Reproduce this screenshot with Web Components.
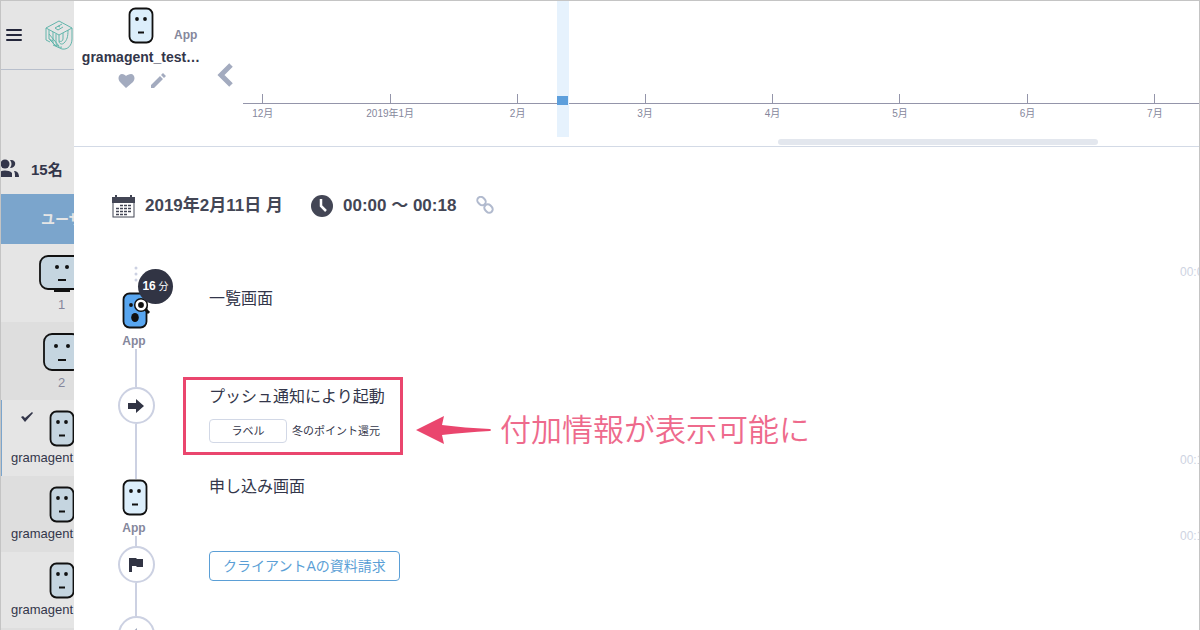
<!DOCTYPE html>
<html lang="ja">
<head>
<meta charset="utf-8">
<title>User timeline</title>
<style>
  * {
    box-sizing: border-box;
  }

  body {
    margin: 0;
    height: 100vh;
    overflow: hidden;
    border: 1px solid #c4c4c4;
    border-bottom: none;
    background-color: #fff;
    color: #33364a;
    font-family: "Liberation Sans", "Noto Sans CJK JP", sans-serif;
    font-size: 14px;
  }
</style>
</head>
<body>

<app-shell>
  <side-bar slot="side">
    <user-row shape="wide" caption="1"></user-row>
    <user-row shape="square" caption="2" alt></user-row>
    <user-row caption="gramagent" selected></user-row>
    <user-row caption="gramagent" alt></user-row>
    <user-row caption="gramagent"></user-row>
    <user-row alt></user-row>
  </side-bar>

  <user-header slot="header" name="gramagent_test…" device="App">
    <month-axis months="12月,2019年1月,2月,3月,4月,5月,6月,7月"></month-axis>
  </user-header>

  <session-title date="2019年2月11日 月" time="00:00 〜 00:18"></session-title>

  <session-event kind="start" device="App" minutes="16" time="00:0">一覧画面</session-event>
  <session-event kind="push">
    <call-out note="付加情報が表示可能に">
      プッシュ通知により起動
      <label-chip slot="detail" text="冬のポイント還元">ラベル</label-chip>
    </call-out>
  </session-event>
  <session-event kind="screen" device="App" time="00:1">申し込み画面</session-event>
  <session-event kind="goal" time="00:1"><goal-button>クライアントAの資料請求</goal-button></session-event>
  <session-event kind="next"></session-event>
</app-shell>

<template id="app-shell-template">
  <style>
    :host {
      display: grid;
      grid-template-columns: 73px minmax(0, 1fr);
      height: 100%;
    }

    aside {
      overflow: hidden;
      background-color: #e5e5e5;
    }

    .panel {
      overflow: hidden;
      background-color: #fff;
    }

    .events {
      padding: 45px 0 0 38px;
    }
  </style>
  <aside><slot name="side"></slot></aside>
  <div class="panel">
    <slot name="header"></slot>
    <main class="events"><slot></slot></main>
  </div>
</template>

<template id="side-bar-template">
  <style>
    :host {
      display: block;
      width: 121px;
    }

    .top {
      display: flex;
      align-items: center;
      gap: 23px;
      box-sizing: border-box;
      height: 69px;
      padding-left: 5px;
      border-bottom: 1px solid #b8bfcc;
    }

    button {
      display: flex;
      padding: 0;
      border: none;
      background: none;
    }

    svg {
      display: block;
    }

    .count {
      display: flex;
      align-items: center;
      gap: 11px;
      height: 52px;
      padding-top: 72px;
      font-size: 15px;
      font-weight: bold;
    }

    .count svg {
      margin-left: -1px;
    }

    .heading {
      height: 50px;
      line-height: 50px;
      padding-left: 40px;
      background-color: #7ba5cc;
      color: #e5e5e5;
      font-size: 14px;
      font-weight: bold;
    }
  </style>
  <div class="top">
    <button aria-label="menu">
      <svg width="16" height="12" stroke="#23263a" stroke-width="2" stroke-linecap="round"><path d="M1 1h14M1 6h14M1 11h14"/></svg>
    </button>
    <svg width="28" height="31" viewBox="0 0 28 31" fill="none" stroke="#62b5ab" stroke-width="1" stroke-linejoin="round">
      <path d="M1 8L14 1L27 8L14 15L1 8V20L5 22"/>
      <path d="M27 8V19C27 25 23 30 17 29L8 25"/>
      <path d="M17 4L10 8L13 10L18 7M13 6L15 7"/>
      <path d="M4 10V19L8 21M8 12V22C8 25 11 26 13 25M11 14V22C11 26 14 28 17 27"/>
      <path d="M14 15V21C14 24 17 25 19 23C22 20 23 17 23 10M18 13V19C18 21 16 22 14 21"/>
      <path d="M4 14L14 26M5 20L12 27"/>
    </svg>
  </div>
  <div class="count">
    <svg width="20" height="18" viewBox="0 0 20 18" fill="#33364a">
      <circle cx="5" cy="5" r="4.500"/>
      <path d="M0 18V13C2 11 9 11 12 14V18Z"/>
      <path d="M10 1C17 0 17 9 10 9C12 6 12 4 10 1ZM14 12C17 12 19 14 19 18H15C15 15 15 14 14 12Z"/>
    </svg>
    <span>15名</span>
  </div>
  <div class="heading">ユーザ</div>
  <slot></slot>
</template>

<template id="user-row-template">
  <style>
    :host {
      display: flex;
      flex-direction: column;
      align-items: center;
      position: relative;
      box-sizing: border-box;
      height: 76px;
      padding-top: 10px;
      --face: #c5d5e0;
    }

    :host([alt]) {
      background-color: #dedede;
    }

    :host([shape]) {
      height: 78px;
      color: #85879c;
    }

    :host([selected]) {
      box-shadow: inset 1px 0 #7ba5cc;
    }

    .caption {
      box-sizing: border-box;
      width: 100%;
      padding-left: 10px;
      font-size: 13px;
      line-height: 22px;
    }

    :host([shape]) .caption {
      padding: 0;
      text-align: center;
    }

    .check {
      position: absolute;
      left: 19px;
      top: 11px;
      display: none;
    }

    :host([selected]) .check {
      display: block;
    }
  </style>
  <svg class="check" width="14" height="12" fill="#33364a"><path d="M1 6L3 5L5 7L12 1L13 2L5 11Z"/></svg>
  <user-face></user-face>
  <span class="caption"></span>
</template>

<template id="user-header-template">
  <style>
    :host {
      display: flex;
      box-sizing: border-box;
      height: 146px;
      border-bottom: 1px solid #d3dae6;
    }

    .profile {
      flex: 0 0 134px;
      display: flex;
      flex-direction: column;
      align-items: center;
      padding-top: 6px;
    }

    .avatar {
      display: grid;
      grid-template-columns: 1fr auto 1fr;
      width: 100%;
    }

    user-face {
      grid-column: 2;
    }

    .device {
      align-self: end;
      padding-left: 20px;
      font-size: 12px;
      font-weight: bold;
      line-height: 18px;
      color: #85879c;
    }

    .name {
      line-height: 26px;
      font-weight: bold;
    }

    .actions {
      display: flex;
      gap: 15px;
      padding: 2px 0 0 3px;
    }

    button {
      display: flex;
      padding: 0;
      border: none;
      background: none;
      color: #a3abbf;
    }

    .prev {
      flex: 0 0 35px;
      justify-content: center;
      padding-top: 62px;
    }

    ::slotted(*) {
      flex: 1;
    }
  </style>
  <div class="profile">
    <div class="avatar">
      <user-face></user-face>
      <span class="device"></span>
    </div>
    <span class="name"></span>
    <div class="actions">
      <button aria-label="favorite">
        <svg width="17" height="18" fill="currentColor"><path d="M8 16L2 10C-1 6 1 2 4 2C6 2 7 3 8 4C9 3 11 2 13 2C16 2 18 6 15 10Z"/></svg>
      </button>
      <button aria-label="edit">
        <svg width="17" height="18" fill="currentColor"><path d="M1 13L10 4L13 7L4 16H1ZM11 3L13 1L16 4L14 6Z"/></svg>
      </button>
    </div>
  </div>
  <button class="prev" aria-label="previous">
    <svg width="18" height="24" fill="none" stroke="currentColor" stroke-width="5"><path d="M14 2L4 12L14 22"/></svg>
  </button>
  <slot></slot>
</template>

<template id="month-axis-template">
  <style>
    :host {
      display: block;
      position: relative;
      overflow: hidden;
    }

    /* one month is 2/15 of the visible track */
    ol {
      display: grid;
      grid-template-columns: repeat(8, calc(100% * 2 / 15));
      width: 100%;
      margin: 93px 0 0 -44px;
      padding: 0;
      list-style: none;
      font-size: 10px;
      line-height: 21px;
      text-align: center;
      color: #85879c;
    }

    li::before {
      content: "";
      display: block;
      width: 1px;
      height: 9px;
      margin: 0 auto;
      background-color: #9495aa;
    }

    li {
      background: linear-gradient(#9495aa, #9495aa) 0 9px / 100% 1px no-repeat;
    }

    .today {
      position: absolute;
      left: 314px;
      top: 0;
      width: 12px;
      height: 136px;
      background-color: #e6f2fd;
    }

    .today::before {
      content: "";
      display: block;
      height: 9px;
      margin-top: 95px;
      background-color: #5d9fdc;
      width: 11px;
    }

    .scroll {
      position: absolute;
      left: 56%;
      bottom: 1px;
      width: 320px;
      height: 6px;
      border-radius: 3px;
      background-color: #e3e7ee;
    }
  </style>
  <ol></ol>
  <div class="today"></div>
  <div class="scroll"></div>
</template>

<template id="session-title-template">
  <style>
    :host {
      display: flex;
      align-items: center;
      height: 28px;
      margin-bottom: 42px;
      font-size: 17px;
      font-weight: bold;
      line-height: 28px;
      color: #434655;
    }

    .date {
      margin: 0 28px 0 10px;
    }

    .time {
      margin: 0 20px 0 10px;
    }

    svg {
      flex: none;
    }

    a {
      display: flex;
    }
  </style>
  <svg width="23" height="23" viewBox="0 0 23 23">
    <rect x="1" y="3" width="21" height="19" fill="#fff" stroke="#434655" stroke-width="1"/>
    <path d="M0 2H23V8H0Z" fill="#434655"/>
    <path d="M4 0V4M19 0V4" stroke="#434655" stroke-width="2"/>
    <path d="M8 10.500H20M4 13.500H20M4 16.500H20M4 19.500H16" stroke="#434655" stroke-width="1.500" stroke-dasharray="3 1"/>
  </svg>
  <span class="date"></span>
  <svg width="22" height="22" viewBox="0 0 22 22"><circle cx="11" cy="11" r="11" fill="#434655"/><path d="M10 4V11L15 16" fill="none" stroke="#fff" stroke-width="2.500"/></svg>
  <span class="time"></span>
  <a href="#" aria-label="link">
    <svg width="18" height="20" viewBox="0 0 18 20" fill="none" stroke="#b1bace" stroke-width="2">
      <rect x="-4.500" y="-3.500" width="9" height="7" rx="3.500" transform="translate(5.500 5) rotate(45)"/>
      <rect x="-4.500" y="-3.500" width="9" height="7" rx="3.500" transform="translate(12.500 12.500) rotate(45)"/>
    </svg>
  </a>
</template>

<template id="session-event-template">
  <style>
    :host {
      display: grid;
      grid-template-columns: 48px minmax(0, 1fr) 19px;
      column-gap: 49px;
      font-size: 16px;
      line-height: 24px;
    }

    .rail {
      display: flex;
      flex-direction: column;
      align-items: center;
    }

    .dots {
      height: 16px;
      margin: 4px 0 10px;
    }

    .line {
      width: 2px;
      background-color: #ccd1e2;
    }

    .face {
      position: relative;
      display: flex;
      margin-right: 2px;
    }

    .badge {
      position: absolute;
      left: 16px;
      top: -23px;
      width: 35px;
      height: 35px;
      border-radius: 50%;
      background-color: #313444;
      color: #fff;
      font-size: 10px;
      line-height: 35px;
      text-align: center;
      white-space: nowrap;
    }

    .badge b {
      font-size: 12px;
    }

    .device {
      margin: 4px 4px 0 0;
      font-size: 12px;
      font-weight: bold;
      line-height: 16px;
      color: #85879c;
    }

    .node {
      display: flex;
      align-items: center;
      justify-content: center;
      box-sizing: border-box;
      width: 37px;
      height: 37px;
      border: 2px solid #ccd1e2;
      border-radius: 50%;
      background-color: #fff;
    }

    time {
      font-size: 12px;
      line-height: 20px;
      color: #ced3e2;
      white-space: nowrap;
    }

    .body {
      padding-top: 25px;
    }

    :host([kind="push"]) .body {
      padding-top: 28px;
    }

    :host([kind="screen"]) .body {
      padding-top: 20px;
    }

    :host([kind="goal"]) .body {
      padding-top: 15px;
    }

    /* times sit above the start of their step */
    :host([kind="screen"]) time {
      margin-top: -5px;
    }

    :host([kind="goal"]) time {
      margin-top: -10px;
    }
  </style>
  <div class="rail"></div>
  <div class="body"><slot></slot></div>
  <time></time>
</template>

<template id="call-out-template">
  <style>
    :host {
      display: flex;
      align-items: flex-end;
      margin-left: -26px;
      color: #33364a;
    }

    .frame {
      flex: none;
      box-sizing: border-box;
      width: 220px;
      padding: 5px 0 9px 23px;
      border: 3px solid #ea466e;
      white-space: nowrap;
    }

    .arrow {
      flex: none;
      margin: 0 8px 8px 12px;
    }

    .note {
      font-size: 31px;
      font-weight: 350;
      line-height: 48px;
      color: #ee6a8c;
      white-space: nowrap;
    }
  </style>
  <div class="frame">
    <slot></slot>
    <slot name="detail"></slot>
  </div>
  <svg class="arrow" width="77" height="34" viewBox="0 0 77 34"><path d="M1 17L29 3L27 12C42 14 58 15 75 16Q77 17 75 18C58 19 42 20 27 22L29 31Z" fill="#ea466e"/></svg>
  <span class="note"></span>
</template>

<template id="label-chip-template">
  <style>
    :host {
      display: flex;
      align-items: center;
      gap: 5px;
      margin-top: 10px;
      font-size: 11px;
    }

    .chip {
      box-sizing: border-box;
      width: 78px;
      height: 24px;
      border: 1px solid #d2d8e6;
      border-radius: 4px;
      line-height: 22px;
      text-align: center;
    }
  </style>
  <span class="chip"><slot></slot></span>
  <span class="text"></span>
</template>

<template id="goal-button-template">
  <style>
    :host {
      display: block;
    }

    button {
      display: block;
      height: 30px;
      padding: 0 13px;
      border: 1px solid #5b9fd6;
      border-radius: 4px;
      background-color: #fff;
      color: #5b9fd6;
      font: inherit;
      font-size: 14px;
      line-height: 28px;
    }
  </style>
  <button><slot></slot></button>
</template>

<script>
  function attach(element, id) {
    const template = document.getElementById(id);
    const root = element.attachShadow({ mode: 'open' });
    root.appendChild(template.content.cloneNode(true));
    return root;
  }

  const FACES = {
    tall: `<svg width="26" height="37" viewBox="0 0 26 37">
      <rect x="1.500" y="1.500" width="23" height="34" rx="6" stroke="#111" stroke-width="1.800"/>
      <circle cx="9" cy="12" r="1.900" fill="#111"/><circle cx="17" cy="12" r="1.900" fill="#111"/>
      <path d="M10 25.500H16" stroke="#111" stroke-width="2"/></svg>`,
    square: `<svg width="38" height="40" viewBox="0 0 38 40">
      <rect x="1" y="2" width="36" height="36" rx="8" stroke="#111" stroke-width="1.800"/>
      <circle cx="13" cy="14" r="2" fill="#111"/><circle cx="25" cy="14" r="2" fill="#111"/>
      <path d="M15 28H23" stroke="#111" stroke-width="2"/></svg>`,
    wide: `<svg width="46" height="40" viewBox="0 0 46 40">
      <path d="M15 36H31" stroke="#111" stroke-width="4"/>
      <rect x="1" y="2" width="44" height="33" rx="8" stroke="#111" stroke-width="1.800"/>
      <circle cx="18" cy="13" r="2" fill="#111"/><circle cx="28" cy="13" r="2" fill="#111"/>
      <path d="M19 26H27" stroke="#111" stroke-width="2"/></svg>`,
    search: `<svg width="26" height="37" viewBox="0 0 26 37">
      <rect x="1.500" y="1.500" width="23" height="34" rx="6" stroke="#111" stroke-width="1.800"/>
      <circle cx="9" cy="13" r="1.900" fill="#111"/>
      <ellipse cx="13" cy="25.500" rx="3.800" ry="4.500" fill="#111"/>
      <path d="M23 17L27 21" stroke="#111" stroke-width="3"/>
      <circle cx="19" cy="13" r="6.300" fill="#fff" stroke="#111" stroke-width="1.500"/>
      <circle cx="19" cy="13" r="2.900" fill="#111"/></svg>`
  };

  class UserFace extends HTMLElement {
    static get observedAttributes() {
      return ['shape'];
    }

    constructor() {
      super();
      this.attachShadow({ mode: 'open' });
    }

    connectedCallback() {
      this.render();
    }

    attributeChangedCallback() {
      this.render();
    }

    render() {
      const shape = this.getAttribute('shape') || 'tall';
      this.shadowRoot.innerHTML = `
        <style>
          :host { display: block; }
          svg { display: block; overflow: visible; }
          rect { fill: var(--face, #dceefb); }
        </style>
        ${FACES[shape]}`;
    }
  }

  class AppShell extends HTMLElement {
    constructor() {
      super();
      attach(this, 'app-shell-template');
    }
  }

  class SideBar extends HTMLElement {
    constructor() {
      super();
      attach(this, 'side-bar-template');
    }
  }

  class UserRow extends HTMLElement {
    connectedCallback() {
      const root = attach(this, 'user-row-template');
      root.querySelector('user-face').setAttribute('shape', this.getAttribute('shape') || 'tall');
      root.querySelector('.caption').textContent = this.getAttribute('caption');
    }
  }

  class UserHeader extends HTMLElement {
    connectedCallback() {
      const root = attach(this, 'user-header-template');
      root.querySelector('.name').textContent = this.getAttribute('name');
      root.querySelector('.device').textContent = this.getAttribute('device');
    }
  }

  class MonthAxis extends HTMLElement {
    connectedCallback() {
      const list = attach(this, 'month-axis-template').querySelector('ol');
      this.getAttribute('months').split(',').forEach(month => {
        const item = document.createElement('li');
        item.textContent = month;
        list.appendChild(item);
      });
    }
  }

  class SessionTitle extends HTMLElement {
    connectedCallback() {
      const root = attach(this, 'session-title-template');
      root.querySelector('.date').textContent = this.getAttribute('date');
      root.querySelector('.time').textContent = this.getAttribute('time');
    }
  }

  const ICONS = {
    push: '<svg width="18" height="16" fill="#313444"><path d="M1 5H9V1L17 8L9 15V11H1Z"/></svg>',
    goal: '<svg width="16" height="16" fill="#313444"><path d="M1 1H8L9 2H15V10H9L8 9H4V15H1Z"/></svg>',
    next: '<svg width="16" height="16" fill="#a3abbf"><path d="M9 1V15L1 8Z"/></svg>'
  };

  class SessionEvent extends HTMLElement {
    connectedCallback() {
      const root = attach(this, 'session-event-template');
      const line = height => `<div class="line" style="height: ${height}px"></div>`;
      const node = kind => `<div class="node">${ICONS[kind]}</div>`;
      const device = `<div class="device">${this.getAttribute('device')}</div>`;
      const rails = {
        start: `
          <svg class="dots" width="4" height="16" fill="#ccd1e2"><circle cx="2" cy="2" r="1.500"/><circle cx="2" cy="8" r="1.500"/><circle cx="2" cy="14" r="1.500"/></svg>
          <div class="face" style="--face: #58a6f0">
            <user-face shape="search"></user-face>
            <div class="badge"><b>${this.getAttribute('minutes')}</b> 分</div>
          </div>${device}`,
        push: line(38) + node('push') + line(31),
        screen: `${line(24)}<div class="face"><user-face></user-face></div>${device}`,
        goal: line(10) + node('goal') + line(33),
        next: node('next')
      };
      root.querySelector('.rail').innerHTML = rails[this.getAttribute('kind')];
      root.querySelector('time').textContent = this.getAttribute('time') || '';
    }
  }

  class CallOut extends HTMLElement {
    connectedCallback() {
      const root = attach(this, 'call-out-template');
      root.querySelector('.note').textContent = this.getAttribute('note');
    }
  }

  class LabelChip extends HTMLElement {
    connectedCallback() {
      const root = attach(this, 'label-chip-template');
      root.querySelector('.text').textContent = this.getAttribute('text');
    }
  }

  class GoalButton extends HTMLElement {
    constructor() {
      super();
      attach(this, 'goal-button-template');
    }
  }

  customElements.define('user-face', UserFace);
  customElements.define('app-shell', AppShell);
  customElements.define('side-bar', SideBar);
  customElements.define('user-row', UserRow);
  customElements.define('user-header', UserHeader);
  customElements.define('month-axis', MonthAxis);
  customElements.define('session-title', SessionTitle);
  customElements.define('session-event', SessionEvent);
  customElements.define('call-out', CallOut);
  customElements.define('label-chip', LabelChip);
  customElements.define('goal-button', GoalButton);
</script>
</body>
</html>
